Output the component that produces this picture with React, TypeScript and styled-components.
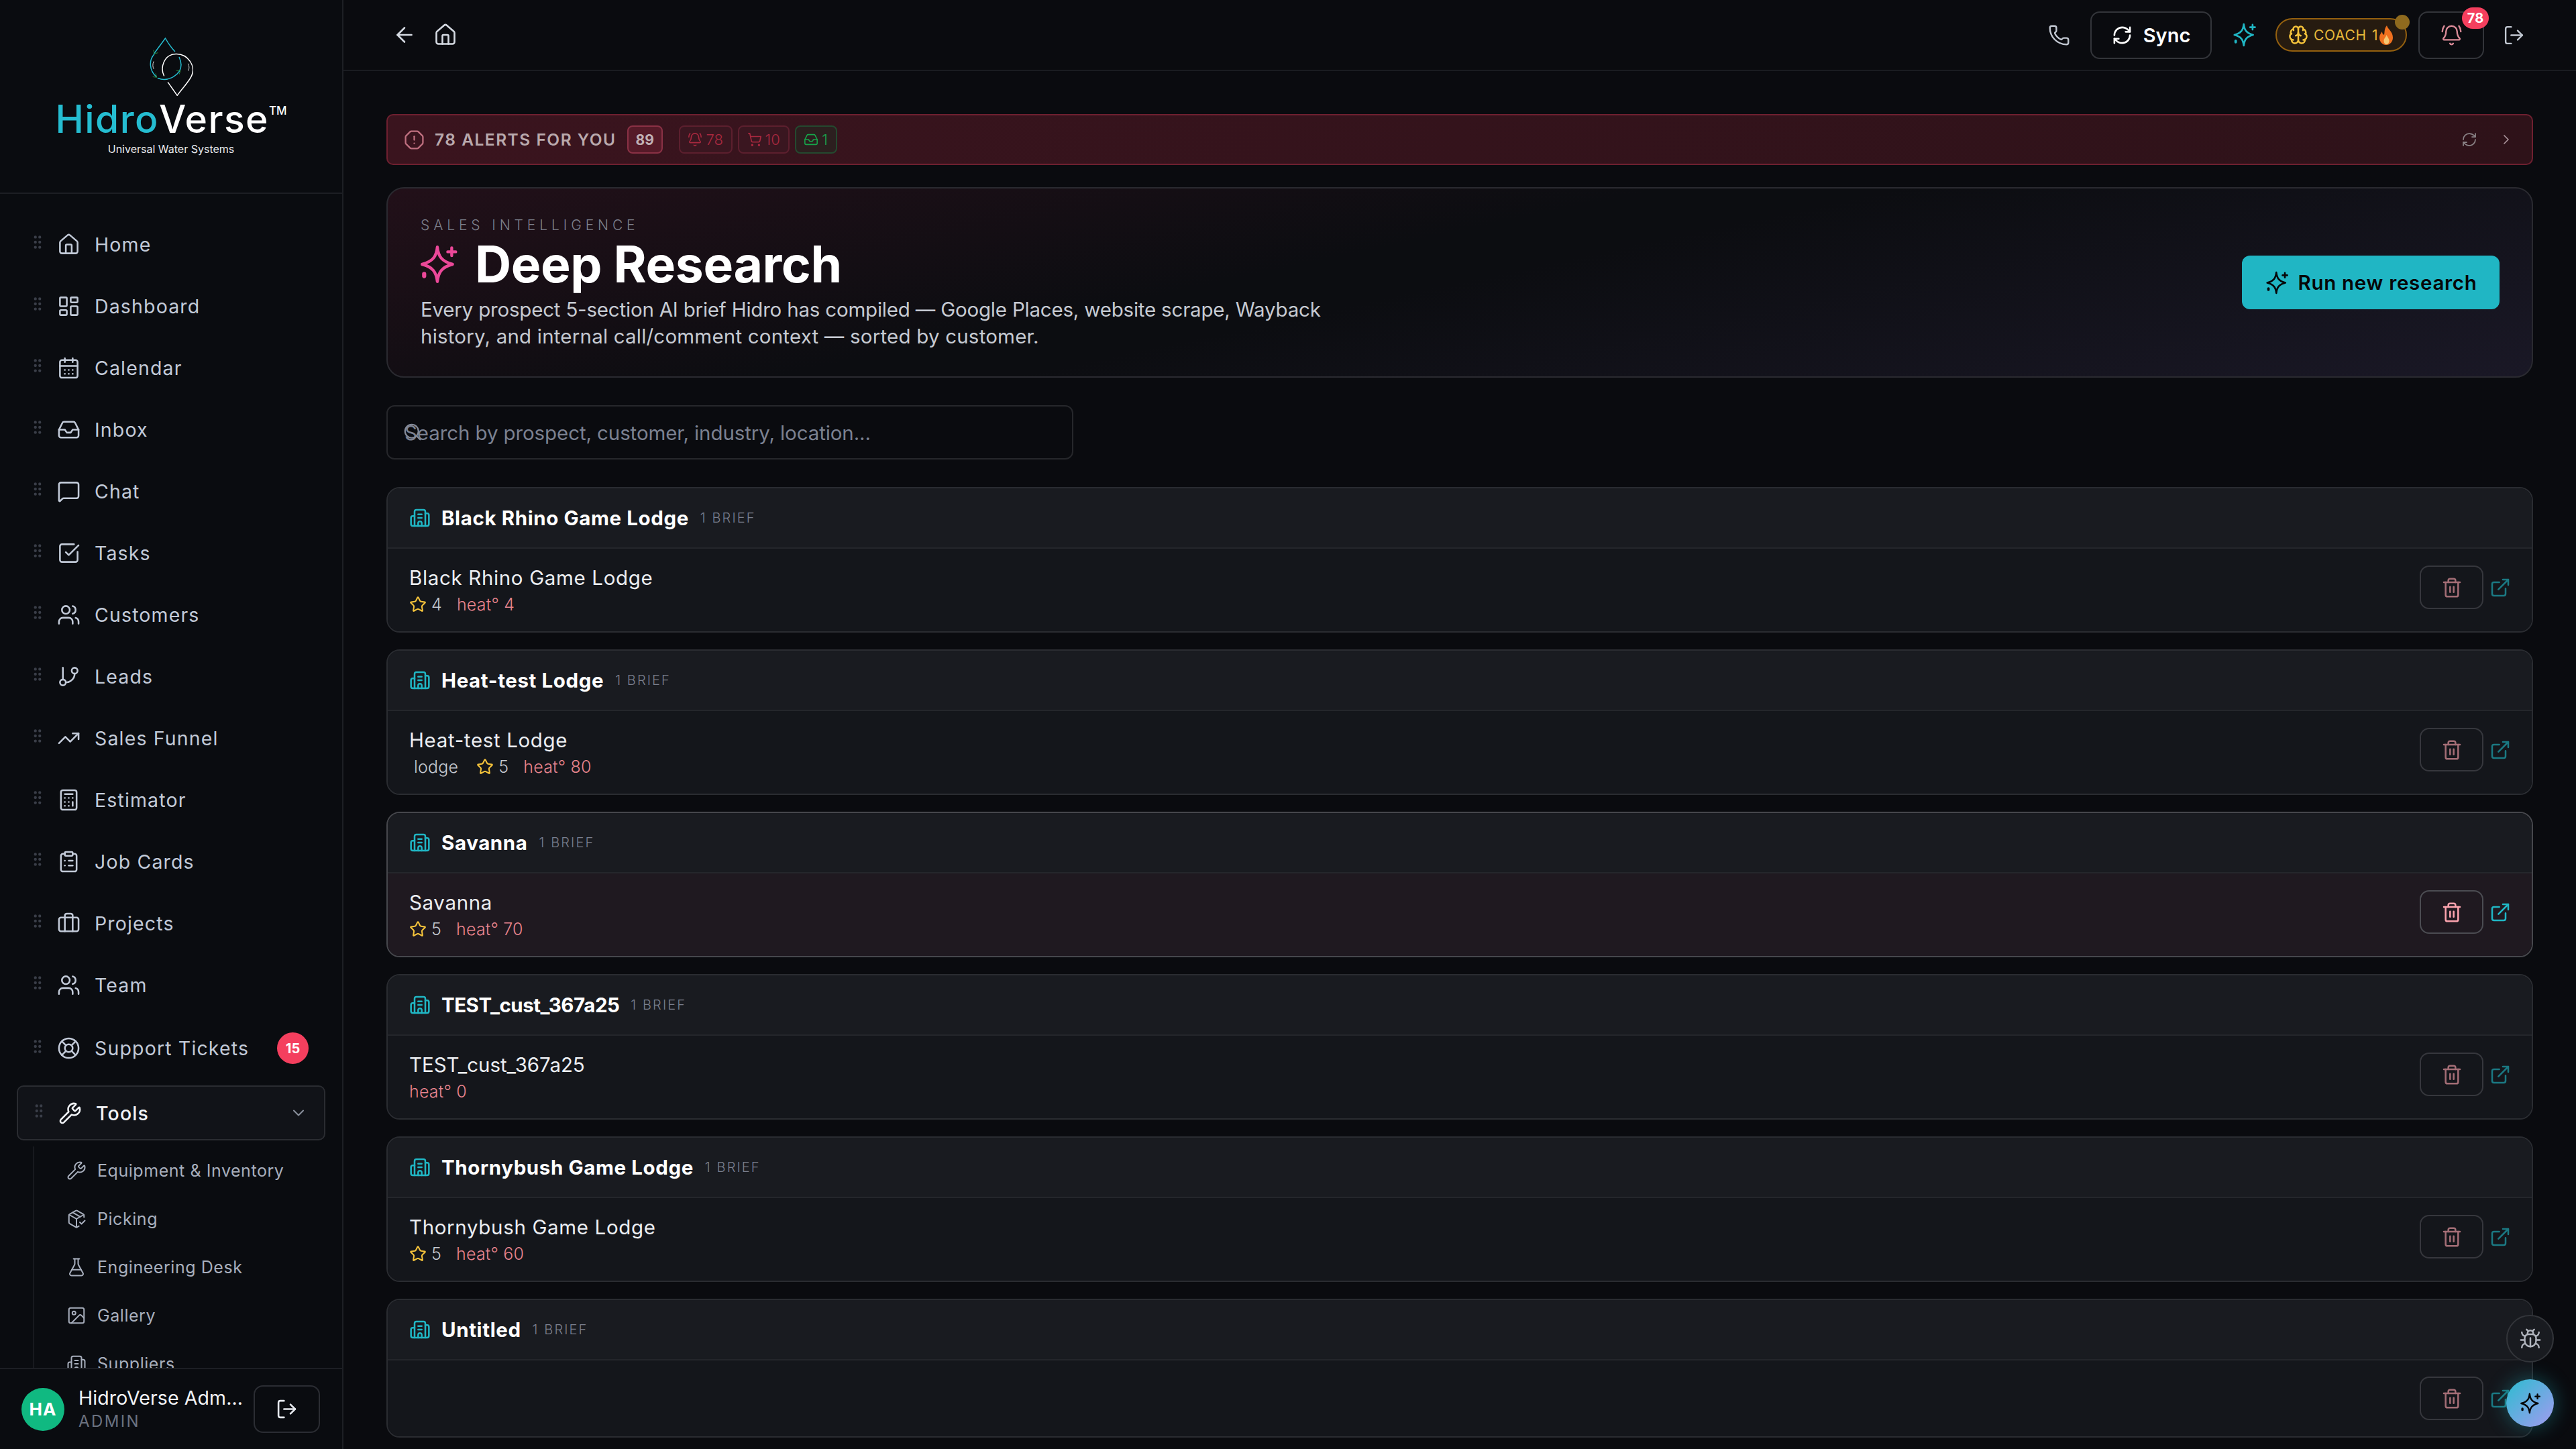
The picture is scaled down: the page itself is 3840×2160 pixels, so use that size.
import * as React from "react";
import styled, { createGlobalStyle } from "styled-components";
import {
  ArrowLeft,
  BellRing,
  Brain,
  Briefcase,
  Bug,
  Building2,
  Calculator,
  CalendarDays,
  ChevronDown,
  ChevronRight,
  ClipboardList,
  ExternalLink,
  FlaskConical,
  GitBranch,
  GripVertical,
  Home,
  Image,
  Inbox,
  LayoutDashboard,
  LifeBuoy,
  LogOut,
  MessageSquare,
  OctagonAlert,
  PackageCheck,
  Phone,
  RefreshCw,
  Search,
  ShoppingCart,
  SquareCheckBig,
  Star,
  Trash2,
  TrendingUp,
  Users,
  Wrench
} from "lucide-react";

const GlobalStyle = createGlobalStyle`
  html, body {
    margin: 0;
    padding: 0;
    background: #0a0b0f;
  }
  * {
    box-sizing: border-box;
  }
  body {
    font-family: Inter, "Noto Sans", sans-serif;
  }
`;

const Root = styled.div`
  display: flex;
  width: 3840px;
  height: 2160px;
  overflow: hidden;
  background: #0a0b0f;
  position: relative;
`;

const Sidebar = styled.aside`
  width: 512px;
  flex-shrink: 0;
  display: flex;
  flex-direction: column;
  background: #0a0c10;
  border-right: 2px solid #1d1f24;
`;

const LogoBlock = styled.div`
  height: 289px;
  flex-shrink: 0;
  display: flex;
  flex-direction: column;
  align-items: center;
  padding-top: 56px;
  border-bottom: 2px solid #1d1f24;
`;

const LogoWord = styled.div`
  display: flex;
  align-items: flex-start;
  margin-top: 3px;
  font-size: 57px;
  line-height: 64px;
  font-weight: 500;
  letter-spacing: 1.4px;
  color: #fff;
`;

const LogoTeal = styled.span`
  color: #25bdd1;
`;

const LogoMark = styled.span`
  font-size: 17px;
  line-height: 38px;
  letter-spacing: 0;
  font-weight: 500;
`;

const LogoTag = styled.div`
  margin-top: 0;
  font-size: 16px;
  line-height: 24px;
  font-weight: 400;
  color: #e8eaee;
`;

const Nav = styled.nav`
  flex: 1;
  min-height: 0;
  overflow: hidden;
  padding: 29px 25px 0;
`;

const NavItem = styled.div<{ $tall?: boolean; $open?: boolean }>`
  display: flex;
  align-items: center;
  height: ${p => (p.$open ? "82px" : p.$tall ? "97px" : "92px")};
  margin-bottom: ${p => (p.$tall ? "7px" : "0")};
  padding: 0 ${p => (p.$open ? "24px" : "31px")} 0 18px;
  font-size: 28.5px;
  letter-spacing: 1.15px;
  color: ${p => (p.$open ? "#f1f3f6" : "#c2cad8")};
  font-weight: ${p => (p.$open ? 500 : 400)};
  background: ${p => (p.$open ? "#111318" : "transparent")};
  border: ${p => (p.$open ? "2px solid #2a2c31" : "none")};
  border-radius: 10px;
`;

const Grip = styled(GripVertical)`
  width: 26px;
  height: 26px;
  flex-shrink: 0;
  margin-right: 16px;
  color: #3a3e48;
  transform: translateY(-3px);
  fill: #3a3e48;
`;

const NavLabel = styled.span`
  flex: 1;
  margin-left: 21px;
`;

const CountBadge = styled.span`
  display: flex;
  align-items: center;
  justify-content: center;
  width: 47px;
  height: 47px;
  margin-right: -6px;
  border-radius: 50%;
  background: #f43f5e;
  color: #fff;
  font-size: 20px;
  font-weight: 700;
  letter-spacing: 0;
`;

const SubList = styled.div`
  margin: 9px 0 0 24px;
  padding-left: 48px;
  border-left: 2px solid #17191e;
`;

const SubItem = styled.div`
  display: flex;
  align-items: center;
  gap: 16px;
  height: 72px;
  font-size: 25px;
  letter-spacing: 0.55px;
  color: #a8afbd;
`;

const UserBar = styled.div`
  height: 121px;
  flex-shrink: 0;
  display: flex;
  align-items: center;
  padding: 0 33px 0 32px;
  background: #0a0c10;
  border-top: 2px solid #1d1f24;
`;

const Avatar = styled.div`
  width: 64px;
  height: 64px;
  flex-shrink: 0;
  display: flex;
  align-items: center;
  justify-content: center;
  border-radius: 50%;
  background: #10b981;
  color: #fff;
  font-size: 26px;
  font-weight: 700;
  letter-spacing: 1px;
`;

const UserText = styled.div`
  width: 247px;
  margin-left: 21px;
  flex-shrink: 0;
`;

const UserName = styled.div`
  font-size: 28.5px;
  line-height: 36px;
  color: #f1f3f6;
  letter-spacing: 0.1px;
  white-space: nowrap;
`;

const UserRole = styled.div`
  font-size: 24px;
  line-height: 34px;
  letter-spacing: 2.4px;
  color: #6b7280;
`;

const UserLogout = styled.button`
  width: 99px;
  height: 71px;
  margin-left: 14px;
  display: flex;
  align-items: center;
  justify-content: center;
  background: transparent;
  border: 2px solid #2b2d33;
  border-radius: 14px;
  color: #e6e9ee;
`;

const Main = styled.main`
  flex: 1;
  min-width: 0;
  display: flex;
  flex-direction: column;
`;

const Header = styled.header`
  height: 106px;
  flex-shrink: 0;
  display: flex;
  align-items: center;
  padding: 0 76px 0 73px;
  border-bottom: 2px solid #1a1c21;
`;

const HeaderLeft = styled.div`
  flex: 1;
  display: flex;
  align-items: center;
  gap: 25px;
  color: #d5dae2;
`;

const PhoneButton = styled.span`
  display: flex;
  color: #c2c8d2;
  margin-right: 30px;
`;

const SyncButton = styled.button`
  display: flex;
  align-items: center;
  justify-content: center;
  gap: 16px;
  width: 181px;
  height: 71px;
  background: transparent;
  border: 2px solid #33353a;
  border-radius: 14px;
  color: #fff;
  font-family: inherit;
  font-size: 29px;
  font-weight: 600;
`;

const SparkButton = styled.span`
  display: flex;
  margin: 0 27px 0 30px;
  color: #20b6c4;
`;

const CoachPill = styled.div`
  position: relative;
  width: 196px;
  height: 50px;
  display: flex;
  align-items: center;
  padding-left: 17px;
  border: 2px solid #94600f;
  border-radius: 25px;
  background: #261b10;
  color: #e8b93a;
  font-size: 21px;
  letter-spacing: 0.7px;
  font-weight: 400;
`;

const CoachLabel = styled.span`
  margin-left: 8px;
  white-space: nowrap;
`;

const CoachCount = styled.span`
  margin: 0 2px 0 8px;
`;

const CoachDot = styled.span`
  position: absolute;
  top: -7px;
  right: -6px;
  width: 22px;
  height: 22px;
  border-radius: 50%;
  background: #8f6a1e;
`;

const BellButton = styled.div`
  position: relative;
  width: 98px;
  height: 71px;
  margin-left: 17px;
  display: flex;
  align-items: center;
  justify-content: center;
  border: 2px solid #33353a;
  border-radius: 14px;
  color: #d98a97;
`;

const BellBadge = styled.span`
  position: absolute;
  top: -8px;
  right: -9px;
  width: 40px;
  height: 32px;
  display: flex;
  align-items: center;
  justify-content: center;
  border-radius: 16px;
  background: #f43f5e;
  color: #fff;
  font-size: 20px;
  font-weight: 700;
`;

const HeaderLogout = styled.span`
  display: flex;
  margin-left: 28px;
  color: #c2c8d2;
`;

const Content = styled.div`
  flex: 1;
  min-height: 0;
  overflow: hidden;
  padding: 64px 64px 0 64px;
`;

const AlertBar = styled.div`
  height: 76px;
  display: flex;
  align-items: center;
  padding: 0 26px 0 24px;
  background: linear-gradient(90deg, #3a141e, #2e1219);
  border: 2px solid #6e2030;
  border-radius: 10px;
`;

const AlertTitle = styled.span`
  margin: 0 16px 0 15px;
  font-size: 24.5px;
  font-weight: 600;
  letter-spacing: 1.5px;
  color: #b9a9ad;
  white-space: nowrap;
`;

const AlertCount = styled.span`
  width: 53px;
  height: 42px;
  display: flex;
  align-items: center;
  justify-content: center;
  margin-right: 24px;
  background: #551a28;
  border: 2px solid #8a3145;
  border-radius: 8px;
  color: #c0b0b4;
  font-size: 21px;
  font-weight: 700;
`;

const AlertChip = styled.span<{ $green?: boolean; $w: number }>`
  width: ${p => p.$w}px;
  height: 42px;
  display: flex;
  align-items: center;
  justify-content: center;
  gap: 5px;
  margin-right: 8px;
  background: ${p => (p.$green ? "#2c1f1f" : "#3a1620")};
  border: 2px solid ${p => (p.$green ? "#24492f" : "#5c1f2e")};
  border-radius: 8px;
  color: ${p => (p.$green ? "#17a34a" : "#a8283f")};
  font-size: 22px;
  font-weight: 300;
`;

const AlertActions = styled.div`
  margin-left: auto;
  display: flex;
  align-items: center;
  gap: 31px;
  color: #8b8488;
`;

const Hero = styled.section`
  height: 284px;
  margin-top: 33px;
  display: flex;
  align-items: center;
  justify-content: space-between;
  padding: 0 48px 0 49px;
  border: 2px solid #2a2a30;
  border-radius: 26px;
  background: linear-gradient(168deg, #221019 0%, #0c0d11 42%, #0c0d11 50%, #1a1826 100%);
`;

const HeroText = styled.div`
  padding-top: 1px;
`;

const Eyebrow = styled.div`
  font-size: 21px;
  line-height: 28px;
  letter-spacing: 5.9px;
  font-weight: 300;
  color: #7c7f8b;
`;

const TitleRow = styled.div`
  display: flex;
  align-items: center;
  gap: 23px;
  margin-top: 2px;
`;

const Title = styled.h1`
  margin: 0;
  font-size: 75px;
  line-height: 84px;
  font-weight: 700;
  color: #fff;
  letter-spacing: -0.4px;
`;

const HeroIcon = styled.span`
  display: flex;
  margin-left: -4px;
  color: #ec4899;
`;

const Description = styled.p`
  margin: 5px 0 0;
  font-size: 29.5px;
  line-height: 40px;
  color: #c6cad2;
`;

const DescriptionLine = styled.span<{ $spacing: number }>`
  display: block;
  white-space: nowrap;
  letter-spacing: ${p => p.$spacing}px;
`;

const RunButton = styled.button`
  width: 384px;
  height: 80px;
  display: flex;
  align-items: center;
  justify-content: center;
  gap: 13px;
  background: #20b6c4;
  border: none;
  border-radius: 12px;
  color: #060709;
  font-family: inherit;
  font-size: 29.5px;
  font-weight: 600;
  letter-spacing: 0.7px;
  white-space: nowrap;
`;

const SearchBox = styled.div`
  position: relative;
  width: 1024px;
  height: 81px;
  margin-top: 41px;
  display: flex;
  align-items: center;
  padding-left: 25px;
  border: 2px solid #26272b;
  border-radius: 12px;
  font-size: 29.5px;
  letter-spacing: -0.1px;
  color: #7b8191;
`;

const SearchIcon = styled(Search)`
  position: absolute;
  left: 22px;
  top: 23px;
  color: #858b9a;
`;

const CardList = styled.div`
  margin-top: 41px;
  display: flex;
  flex-direction: column;
  gap: 25px;
`;

const Card = styled.section<{ $active?: boolean; $blank?: boolean }>`
  height: ${p => (p.$blank ? "207px" : "217px")};
  flex-shrink: 0;
  display: flex;
  flex-direction: column;
  overflow: hidden;
  border: 2px solid ${p => (p.$active ? "#46474c" : "#2a2c31")};
  border-radius: 20px;
`;

const CardHeader = styled.div`
  height: 90px;
  flex-shrink: 0;
  display: flex;
  align-items: center;
  padding: 0 32px;
  background: #191b20;
  border-bottom: 2px solid #24262b;
`;

const CardName = styled.span<{ $tight?: boolean }>`
  margin-left: 16px;
  font-size: 29.5px;
  font-weight: 700;
  color: #fff;
  letter-spacing: ${p => (p.$tight ? "-0.5px" : "0.6px")};
`;

const BriefCount = styled.span`
  margin-left: 17px;
  font-size: 20px;
  font-weight: 300;
  letter-spacing: 2.1px;
  color: #7a7f8e;
`;

const CardRow = styled.div<{ $active?: boolean }>`
  flex: 1;
  display: flex;
  align-items: center;
  justify-content: space-between;
  padding: 0 31px 0 32px;
  background: ${p => (p.$active ? "#1f1920" : "#14161b")};
`;

const RowName = styled.div<{ $tight?: boolean }>`
  font-size: 29.5px;
  line-height: 40px;
  letter-spacing: ${p => (p.$tight ? "-0.05px" : "0.65px")};
  color: #eceef2;
`;

const RowMeta = styled.div`
  display: flex;
  align-items: center;
  gap: 7px;
  height: 36px;
  margin-top: 2px;
  font-size: 25px;
  font-weight: 300;
  letter-spacing: 0.2px;
  color: #c4c8d0;
`;

const MetaTag = styled.span`
  margin: 0 20px 0 7px;
`;

const MetaStar = styled(Star)`
  color: #f5c33b;
`;

const MetaRating = styled.span`
  margin-right: 15px;
`;

const MetaHeat = styled.span`
  color: #e8848e;
`;

const RowActions = styled.div<{ $active?: boolean; $blank?: boolean }>`
  display: flex;
  align-items: center;
  gap: 9px;
  opacity: ${p => (p.$active ? 1 : 0.62)};
  margin-top: ${p => (p.$blank ? "0" : "-8px")};
`;

const TrashButton = styled.button`
  width: 95px;
  height: 65px;
  display: flex;
  align-items: center;
  justify-content: center;
  background: transparent;
  border: 2px solid #4b4c52;
  border-radius: 14px;
  color: #fda4af;
`;

const OpenLink = styled.span`
  display: flex;
  color: #20b6c4;
`;

const FloatColumn = styled.div`
  position: absolute;
  right: 33px;
  bottom: 33px;
  display: flex;
  flex-direction: column;
  gap: 25px;
`;

const BugButton = styled.div`
  width: 71px;
  height: 71px;
  display: flex;
  align-items: center;
  justify-content: center;
  border-radius: 50%;
  background: #191b20;
  border: 2px solid #33353a;
  color: #b0b4bd;
`;

const AiButton = styled.div`
  width: 71px;
  height: 71px;
  display: flex;
  align-items: center;
  justify-content: center;
  border-radius: 50%;
  background: linear-gradient(135deg, #2cbcd0, #a29bf0);
  box-shadow: 0 0 30px rgba(32, 182, 196, 0.4);
  color: #050608;
`;

const navItems = [
  { label: "Home", icon: Home },
  { label: "Dashboard", icon: LayoutDashboard },
  { label: "Calendar", icon: CalendarDays },
  { label: "Inbox", icon: Inbox },
  { label: "Chat", icon: MessageSquare },
  { label: "Tasks", icon: SquareCheckBig },
  { label: "Customers", icon: Users },
  { label: "Leads", icon: GitBranch },
  { label: "Sales Funnel", icon: TrendingUp },
  { label: "Estimator", icon: Calculator },
  { label: "Job Cards", icon: ClipboardList },
  { label: "Projects", icon: Briefcase },
  { label: "Team", icon: Users }
];

const subItems = [
  { label: "Equipment & Inventory", icon: Wrench },
  { label: "Picking", icon: PackageCheck },
  { label: "Engineering Desk", icon: FlaskConical },
  { label: "Gallery", icon: Image },
  { label: "Suppliers", icon: Building2 }
];

const groups: {
  name: string;
  tag?: string;
  stars?: number;
  heat?: number;
  blank?: boolean;
  active?: boolean;
  tight?: boolean;
}[] = [
  { name: "Black Rhino Game Lodge", stars: 4, heat: 4 },
  { name: "Heat-test Lodge", tag: "lodge", stars: 5, heat: 80 },
  { name: "Savanna", stars: 5, heat: 70, active: true },
  { name: "TEST_cust_367a25", heat: 0, tight: true },
  { name: "Thornybush Game Lodge", stars: 5, heat: 60 },
  { name: "Untitled", blank: true }
];

const BrandMark = () => (
  <svg width="65" height="87" viewBox="548 115 194 260" fill="none" strokeLinecap="round">
    <g stroke="#25bdd1" strokeWidth="4.5">
      <path d="M660 176 C645 160 630 140 618 118 L568 186" />
      <path d="M568 190 C545 215 545 260 578 290" />
      <path d="M585 296 C630 315 690 280 688 235 C688 222 684 212 680 203" />
    </g>
    <g stroke="#fff" strokeWidth="4.5">
      <path d="M612 285 C595 250 610 190 665 188 C720 186 755 245 735 285 C725 310 690 345 671 373 L630 315" />
      <path d="M566 222 C561 232 561 245 566 254" strokeWidth="2.5" />
      <path d="M720 232 C725 242 725 252 721 262" strokeWidth="2.5" />
    </g>
    <g stroke="#2f9e44" strokeWidth="2.5">
      <path d="M565 172 L570 187 L584 183" />
      <path d="M563 290 L580 292 L575 276" />
      <path d="M668 262 L685 263 L680 278" />
    </g>
  </svg>
);

// tall four-point star with a plus top right and a diamond bottom left
const SparkIcon = ({ size }: { size: number }) => (
  <svg
    width={size}
    height={size}
    viewBox="0 0 24 24"
    fill="none"
    stroke="currentColor"
    strokeWidth="1.7"
    strokeLinecap="round"
    strokeLinejoin="round"
  >
    <path d="M11.2 2 C11.8 7.6 13.8 10.4 20 12 C13.8 13.6 11.8 16.4 11.2 22 C10.6 16.4 8.6 13.6 2.4 12 C8.6 10.4 10.6 7.6 11.2 2 Z" />
    <path d="M19.5 2.5 V7 M17.2 4.8 H21.8" />
    <path d="M3.6 17.6 V18.8" strokeWidth="2.4" />
  </svg>
);

const Flame = () => (
  <svg width="21" height="29" viewBox="0 0 21 29">
    <path d="M11 0c1 5 9 9 9 18 0 6-4 11-10 11S0 24 0 18c0-4 2-6 4-9 0 3 1 4 3 5 1-5 0-9 4-14z" fill="#f0701e" />
    <path d="M10.5 14c1 3 4 5 4 9 0 3-2 5-4 5s-4-2-4-5c0-4 3-5 4-9z" fill="#f7c873" />
  </svg>
);

export default function App() {
  return (
    <Root>
      <GlobalStyle />
      <Sidebar>
        <LogoBlock>
          <BrandMark />
          <LogoWord>
            <LogoTeal>Hidro</LogoTeal>Verse<LogoMark>TM</LogoMark>
          </LogoWord>
          <LogoTag>Universal Water Systems</LogoTag>
        </LogoBlock>
        <Nav>
          {navItems.map(item => (
            <NavItem key={item.label}>
              <Grip />
              <item.icon size={35} strokeWidth={1.75} />
              <NavLabel>{item.label}</NavLabel>
            </NavItem>
          ))}
          <NavItem $tall>
            <Grip />
            <LifeBuoy size={35} strokeWidth={1.75} />
            <NavLabel>Support Tickets</NavLabel>
            <CountBadge>15</CountBadge>
          </NavItem>
          <NavItem $open>
            <Grip />
            <Wrench size={35} strokeWidth={1.75} />
            <NavLabel>Tools</NavLabel>
            <ChevronDown size={28} strokeWidth={1.75} color="#8a909c" />
          </NavItem>
          <SubList>
            {subItems.map(item => (
              <SubItem key={item.label}>
                <item.icon size={30} strokeWidth={1.6} />
                {item.label}
              </SubItem>
            ))}
          </SubList>
        </Nav>
        <UserBar>
          <Avatar>HA</Avatar>
          <UserText>
            <UserName>HidroVerse Adm...</UserName>
            <UserRole>ADMIN</UserRole>
          </UserText>
          <UserLogout>
            <LogOut size={33} strokeWidth={1.9} />
          </UserLogout>
        </UserBar>
      </Sidebar>
      <Main>
        <Header>
          <HeaderLeft>
            <ArrowLeft size={36} strokeWidth={1.75} />
            <Home size={36} strokeWidth={1.75} />
          </HeaderLeft>
          <PhoneButton>
            <Phone size={33} strokeWidth={1.75} />
          </PhoneButton>
          <SyncButton>
            <RefreshCw size={31} strokeWidth={2} />
            Sync
          </SyncButton>
          <SparkButton>
            <SparkIcon size={38} />
          </SparkButton>
          <CoachPill>
            <Brain size={30} strokeWidth={2} color="#f5c33b" />
            <CoachLabel>COACH</CoachLabel>
            <CoachCount>1</CoachCount>
            <Flame />
            <CoachDot />
          </CoachPill>
          <BellButton>
            <BellRing size={33} strokeWidth={1.75} />
            <BellBadge>78</BellBadge>
          </BellButton>
          <HeaderLogout>
            <LogOut size={33} strokeWidth={1.75} />
          </HeaderLogout>
        </Header>
        <Content>
          <AlertBar>
            <OctagonAlert size={31} strokeWidth={1.75} color="#c07080" />
            <AlertTitle>78 ALERTS FOR YOU</AlertTitle>
            <AlertCount>89</AlertCount>
            <AlertChip $w={80}>
              <BellRing size={22} strokeWidth={1.75} />
              78
            </AlertChip>
            <AlertChip $w={77}>
              <ShoppingCart size={22} strokeWidth={1.75} />
              10
            </AlertChip>
            <AlertChip $w={63} $green>
              <Inbox size={22} strokeWidth={1.75} />1
            </AlertChip>
            <AlertActions>
              <RefreshCw size={24} strokeWidth={1.75} />
              <ChevronRight size={24} strokeWidth={1.75} color="#a8929a" />
            </AlertActions>
          </AlertBar>
          <Hero>
            <HeroText>
              <Eyebrow>SALES INTELLIGENCE</Eyebrow>
              <TitleRow>
                <HeroIcon>
                  <SparkIcon size={62} />
                </HeroIcon>
                <Title>Deep Research</Title>
              </TitleRow>
              <Description>
                <DescriptionLine $spacing={-0.2}>
                  Every prospect 5-section AI brief Hidro has compiled — Google Places, website scrape, Wayback
                </DescriptionLine>
                <DescriptionLine $spacing={0.2}>
                  history, and internal call/comment context — sorted by customer.
                </DescriptionLine>
              </Description>
            </HeroText>
            <RunButton>
              <SparkIcon size={37} />
              Run new research
            </RunButton>
          </Hero>
          <SearchBox>
            <SearchIcon size={30} strokeWidth={1.75} />
            Search by prospect, customer, industry, location...
          </SearchBox>
          <CardList>
            {groups.map(group => (
              <Card key={group.name} $active={group.active} $blank={group.blank}>
                <CardHeader>
                  <Building2 size={32} strokeWidth={1.9} color="#20b6c4" />
                  <CardName $tight={group.tight}>{group.name}</CardName>
                  <BriefCount>1 BRIEF</BriefCount>
                </CardHeader>
                <CardRow $active={group.active}>
                  <div>
                    {!group.blank && <RowName $tight={group.tight}>{group.name}</RowName>}
                    {!group.blank && (
                      <RowMeta>
                        {group.tag && <MetaTag>{group.tag}</MetaTag>}
                        {group.stars !== undefined && <MetaStar size={26} strokeWidth={1.9} />}
                        {group.stars !== undefined && <MetaRating>{group.stars}</MetaRating>}
                        <MetaHeat>heat° {group.heat}</MetaHeat>
                      </RowMeta>
                    )}
                  </div>
                  <RowActions $active={group.active} $blank={group.blank}>
                    <TrashButton>
                      <Trash2 size={32} strokeWidth={1.9} />
                    </TrashButton>
                    <OpenLink>
                      <ExternalLink size={32} strokeWidth={1.9} />
                    </OpenLink>
                  </RowActions>
                </CardRow>
              </Card>
            ))}
          </CardList>
        </Content>
      </Main>
      <FloatColumn>
        <BugButton>
          <Bug size={34} strokeWidth={1.75} />
        </BugButton>
        <AiButton>
          <SparkIcon size={34} />
        </AiButton>
      </FloatColumn>
    </Root>
  );
}
